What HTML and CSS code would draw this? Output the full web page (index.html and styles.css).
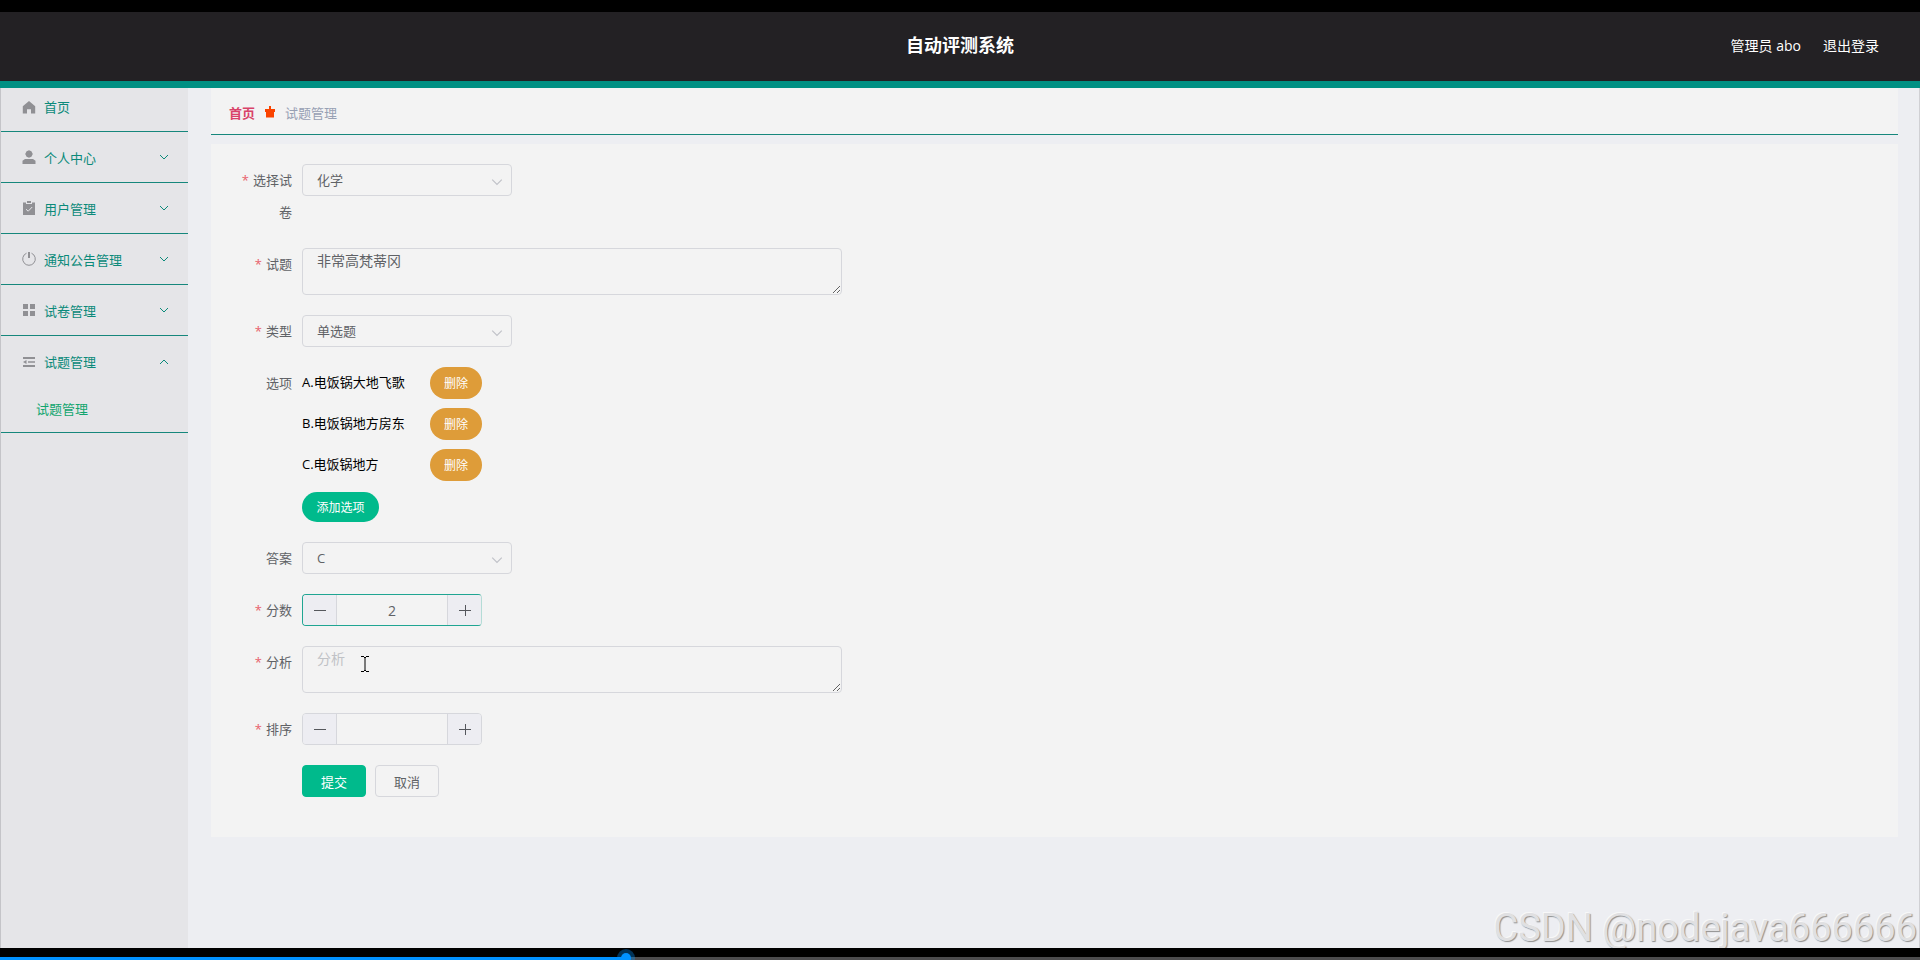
FILE: index.html
```html
<!DOCTYPE html>
<html lang="zh-CN">
<head>
  <meta charset="UTF-8" />
  <meta name="viewport" content="width=device-width, initial-scale=1" />
  <title>自动评测系统</title>
  <link rel="stylesheet" href="styles.css">
</head>
<body>
  <header class="header">
    <h1 class="title">自动评测系统</h1>
    <div class="user-info">
      <span>管理员 abo</span>
      <a href="#">退出登录</a>
    </div>
  </header>

  <div class="container">
    <nav class="sidebar">
      <a class="menu-item menu-home" href="#">
        <svg class="menu-icon" viewBox="0 0 14 14"><path d="M7 1L.8 6.2V13.4H5V9.2h4v4.2h4.200V6.200z"/></svg>
        <span class="menu-text">首页</span>
      </a>
      <a class="menu-item" href="#">
        <svg class="menu-icon" viewBox="0 0 14 14"><path d="M7 .2l2.400 1 1.400 2.800-1.400 2.800L7 7.800l-2.400-1L3.200 4l1.400-2.800zM3 9h8l2.500 1.800V14H.5v-3.200z"/></svg>
        <span class="menu-text">个人中心</span>
        <svg class="arrow" viewBox="0 0 10 10"><path d="M1 3l4 4 4-4"/></svg>
      </a>
      <a class="menu-item" href="#">
        <svg class="menu-icon" viewBox="0 0 14 14"><path d="M5 0h4v2H5zM1 1.500h3v1.500h6V1.500h3V14H1z"/><path class="tick" d="M4 8.200l2.200 2L10.200 6"/></svg>
        <span class="menu-text">用户管理</span>
        <svg class="arrow" viewBox="0 0 10 10"><path d="M1 3l4 4 4-4"/></svg>
      </a>
      <a class="menu-item" href="#">
        <svg class="menu-icon line" viewBox="0 0 14 14"><path d="M4.500 1.200A6.300 6.300 0 1 0 9.500 1.200"/><path class="bar" d="M7 0v6"/></svg>
        <span class="menu-text">通知公告管理</span>
        <svg class="arrow" viewBox="0 0 10 10"><path d="M1 3l4 4 4-4"/></svg>
      </a>
      <a class="menu-item" href="#">
        <svg class="menu-icon" viewBox="0 0 14 14"><path d="M1 1h5v5H1zM8 1h5v5H8zM1 8h5v5H1zM8 8h5v5H8z"/></svg>
        <span class="menu-text">试卷管理</span>
        <svg class="arrow" viewBox="0 0 10 10"><path d="M1 3l4 4 4-4"/></svg>
      </a>
      <div class="menu-group">
        <a class="menu-item" href="#">
          <svg class="menu-icon" viewBox="0 0 14 14"><path d="M1 2h12v2H1zM6 6.200h7v1.600H6zM1 10h12v2H1zM1 7l3.500-2v4z"/></svg>
          <span class="menu-text">试题管理</span>
          <svg class="arrow" viewBox="0 0 10 10"><path d="M1 7l4-4 4 4"/></svg>
        </a>
        <a class="submenu-item" href="#">试题管理</a>
      </div>
    </nav>

    <main class="main">
      <div class="breadcrumb">
        <a href="#">首页</a>
        <svg class="crumb-icon" viewBox="0 0 10 12"><path d="M4 0h2v3h4v3H9v5.500H1V6H0V3h4z"/></svg>
        <span>试题管理</span>
      </div>

      <form class="form">
        <div class="row">
          <label class="label required" for="paper">选择试卷</label>
          <div class="select">
            <select id="paper"><option>化学</option></select>
            <svg class="arrow" viewBox="0 0 10 10"><path d="M1 3l4 4 4-4"/></svg>
          </div>
        </div>

        <div class="row">
          <label class="label required" for="question">试题</label>
          <textarea id="question">非常高梵蒂冈</textarea>
        </div>

        <div class="row">
          <label class="label required" for="type">类型</label>
          <div class="select">
            <select id="type"><option>单选题</option></select>
            <svg class="arrow" viewBox="0 0 10 10"><path d="M1 3l4 4 4-4"/></svg>
          </div>
        </div>

        <div class="row">
          <span class="label">选项</span>
          <div class="options">
            <div class="option"><span>A.电饭锅大地飞歌</span><button type="button" class="btn-delete">删除</button></div>
            <div class="option"><span>B.电饭锅地方房东</span><button type="button" class="btn-delete">删除</button></div>
            <div class="option"><span>C.电饭锅地方</span><button type="button" class="btn-delete">删除</button></div>
            <button type="button" class="btn-add">添加选项</button>
          </div>
        </div>

        <div class="row">
          <label class="label" for="answer">答案</label>
          <div class="select">
            <select id="answer"><option>C</option></select>
            <svg class="arrow" viewBox="0 0 10 10"><path d="M1 3l4 4 4-4"/></svg>
          </div>
        </div>

        <div class="row">
          <label class="label required" for="score">分数</label>
          <div class="number active">
            <button type="button" aria-label="减少"><svg viewBox="0 0 12 12"><path d="M0 6.500h12"/></svg></button>
            <input id="score" type="text" value="2">
            <button type="button" aria-label="增加"><svg viewBox="0 0 12 12"><path d="M0 6.500h12M6.500 1v11"/></svg></button>
          </div>
        </div>

        <div class="row">
          <label class="label required" for="analysis">分析</label>
          <div class="textarea-wrap">
            <textarea id="analysis" placeholder="分析"></textarea>
            <svg class="cursor" viewBox="0 0 8 16"><path d="M0 .5h3M5 .5h3M3 1.500h2M4 1v14M3 14.500h2M0 15.500h3M5 15.500h3"/></svg>
          </div>
        </div>

        <div class="row">
          <label class="label required" for="sort">排序</label>
          <div class="number">
            <button type="button" aria-label="减少"><svg viewBox="0 0 12 12"><path d="M0 6.500h12"/></svg></button>
            <input id="sort" type="text" value="">
            <button type="button" aria-label="增加"><svg viewBox="0 0 12 12"><path d="M0 6.500h12M6.500 1v11"/></svg></button>
          </div>
        </div>

        <div class="row actions">
          <button type="submit" class="btn btn-submit">提交</button>
          <button type="button" class="btn">取消</button>
        </div>
      </form>
    </main>
    <div class="watermark">CSDN @nodejava666666</div>
  </div>

  <div class="player">
    <input class="progress" type="range" min="0" max="1000" value="325" aria-label="播放进度">
  </div>
</body>
</html>
```

FILE: styles.css
```css
* {
  box-sizing: border-box;
}

body {
  margin: 0;
  height: 100vh;
  display: flex;
  flex-direction: column;
  overflow: hidden;
  font-family: "Open Sans", "Noto Sans CJK SC", sans-serif;
  font-size: 13px;
  color: #606266;
  background: #edeef2;
}

a {
  text-decoration: none;
  color: inherit;
}

button,
input,
select,
textarea {
  font-family: inherit;
  font-size: 13px;
  color: inherit;
  margin: 0;
}

/* header */
.header {
  display: grid;
  grid-template-columns: 1fr auto 1fr;
  align-items: center;
  height: 88px;
  flex-shrink: 0;
  padding: 0 41px 4px;
  background: #232124;
  border-top: 12px solid #000;
  border-bottom: 7px solid #009083;
  color: #fff;
}

.title {
  grid-column: 2;
  margin: 0;
  font-size: 18px;
  line-height: 24px;
}

.user-info {
  display: flex;
  justify-content: flex-end;
  gap: 22px;
  font-size: 14px;
}

.container {
  flex: 1;
  display: flex;
  min-height: 0;
  position: relative;
  border-left: 1px solid #c4c4c8;
  border-right: 1px solid #d0d0d4;
}

/* sidebar */
.sidebar {
  width: 187px;
  flex-shrink: 0;
  background: #e5e5e8;
  color: #0b8a7a;
}

.menu-item {
  display: flex;
  align-items: center;
  gap: 8px;
  height: 51px;
  padding: 0 19px 0 21px;
  border-bottom: 1px solid #16877c;
}

.menu-home {
  height: 44px;
  padding-bottom: 6px;
}

.menu-text {
  flex: 1;
}

.menu-icon {
  width: 14px;
  height: 14px;
  fill: #909094;
}

.menu-icon .tick {
  fill: none;
  stroke: #e5e5e8;
}

.menu-icon.line {
  fill: none;
  stroke: #909094;
}

.menu-icon .bar {
  stroke-width: 2;
}

.arrow {
  width: 10px;
  height: 10px;
  fill: none;
  stroke: currentColor;
}

.menu-group {
  height: 97px;
  border-bottom: 1px solid #16877c;
}

.menu-group .menu-item {
  border-bottom: 0;
}

.submenu-item {
  display: block;
  padding-left: 35px;
  line-height: 44px;
  color: #12a56f;
}

/* content */
.main {
  flex: 1;
  padding: 0 21px 0 23px;
}

.breadcrumb {
  display: flex;
  align-items: center;
  gap: 10px;
  height: 47px;
  padding: 2px 18px 0;
  margin-bottom: 9px;
  background: #f3f3f3;
  border-bottom: 1px solid #16877c;
  color: #97a0b4;
}

.breadcrumb a {
  color: #d9436a;
  font-weight: 600;
}

.crumb-icon {
  width: 10px;
  height: 12px;
  fill: #fa4300;
}

.form {
  display: flex;
  flex-direction: column;
  gap: 20px;
  padding: 20px 20px 40px;
  background: #f3f3f3;
}

.row {
  display: flex;
}

.label {
  width: 71px;
  padding-right: 10px;
  line-height: 32px;
  text-align: right;
  flex-shrink: 0;
}

.required::before {
  content: "*";
  margin-right: 4px;
  color: #e8606a;
}

.select {
  width: 210px;
  position: relative;
}

.select select {
  width: 100%;
  height: 32px;
  padding: 0 14px;
  appearance: none;
  background: none;
  border: 1px solid #d6d7dc;
  border-radius: 4px;
}

.select .arrow {
  position: absolute;
  right: 9px;
  top: 12px;
  width: 12px;
  height: 12px;
  color: #c0c2c8;
  pointer-events: none;
}

textarea {
  display: block;
  width: 540px;
  height: 47px;
  padding: 2px 14px;
  font-size: 14px;
  line-height: 20px;
  background: none;
  border: 1px solid #d6d7dc;
  border-radius: 4px;
  resize: vertical;
}

textarea::placeholder {
  color: #c0c2c6;
}

.textarea-wrap {
  position: relative;
}

/* text pointer over the field */
.cursor {
  position: absolute;
  left: 59px;
  top: 10px;
  width: 8px;
  height: 16px;
  stroke: #000;
  fill: none;
}

.options {
  display: flex;
  flex-direction: column;
  align-items: flex-start;
  gap: 9px;
}

.option {
  display: flex;
  height: 32px;
  line-height: 30px;
  color: #000;
}

.option span {
  width: 128px;
}

.btn-delete,
.btn-add {
  border: 0;
  border-radius: 16px;
  padding: 0;
  font-size: 12px;
  color: #fff;
}

.btn-delete {
  width: 52px;
  height: 32px;
  background: #de9c39;
}

.btn-add {
  width: 77px;
  height: 30px;
  margin-top: 2px;
  background: #00ba8c;
}

.number {
  display: flex;
  width: 180px;
  height: 32px;
  border: 1px solid #d6d7dc;
  border-radius: 4px;
  overflow: hidden;
}

.number.active {
  border-color: #1fa592;
  border-right-color: #b4dcd6;
}

.number button {
  display: flex;
  align-items: center;
  justify-content: center;
  width: 33px;
  padding: 0;
  border: 0;
  background: #ededf2;
}

.number svg {
  width: 12px;
  height: 12px;
  stroke: #55575c;
}

.number input {
  flex: 1;
  min-width: 0;
  padding: 0;
  font-size: 14px;
  text-align: center;
  background: none;
  border: 0;
  border-left: 1px solid #d6d7dc;
  border-right: 1px solid #d6d7dc;
}

.actions {
  gap: 9px;
  padding-left: 71px;
}

.btn {
  width: 64px;
  height: 32px;
  padding: 0;
  background: none;
  border: 1px solid #d6d7dc;
  border-radius: 4px;
}

.btn-submit {
  background: #00ba8c;
  border-color: #00ba8c;
  color: #fff;
}

.watermark {
  position: absolute;
  right: 2px;
  bottom: 1px;
  font-family: Roboto, sans-serif;
  font-size: 38px;
  font-weight: 400;
  line-height: 38px;
  color: #e0e0e2;
  text-shadow: 1px 1px 1px #909090, -1px -1px 0 #f8f8f8;
}

/* video progress bar */
.player {
  position: relative;
  flex-shrink: 0;
  height: 12px;
  background: #000;
  overflow: hidden;
}

.progress {
  position: absolute;
  left: 0;
  top: 1px;
  width: 100%;
  height: 19px;
  appearance: none;
  background: none;
}

.progress::-webkit-slider-runnable-track {
  height: 3px;
  background: linear-gradient(to right, #0091ff 32.5%, #4c4c4e 32.5%);
}

.progress::-webkit-slider-thumb {
  appearance: none;
  width: 10px;
  height: 10px;
  margin-top: -4px;
  border-radius: 50%;
  background: #0091ff;
  box-shadow: 0 0 0 4px rgba(0, 145, 255, 0.35);
}
```
